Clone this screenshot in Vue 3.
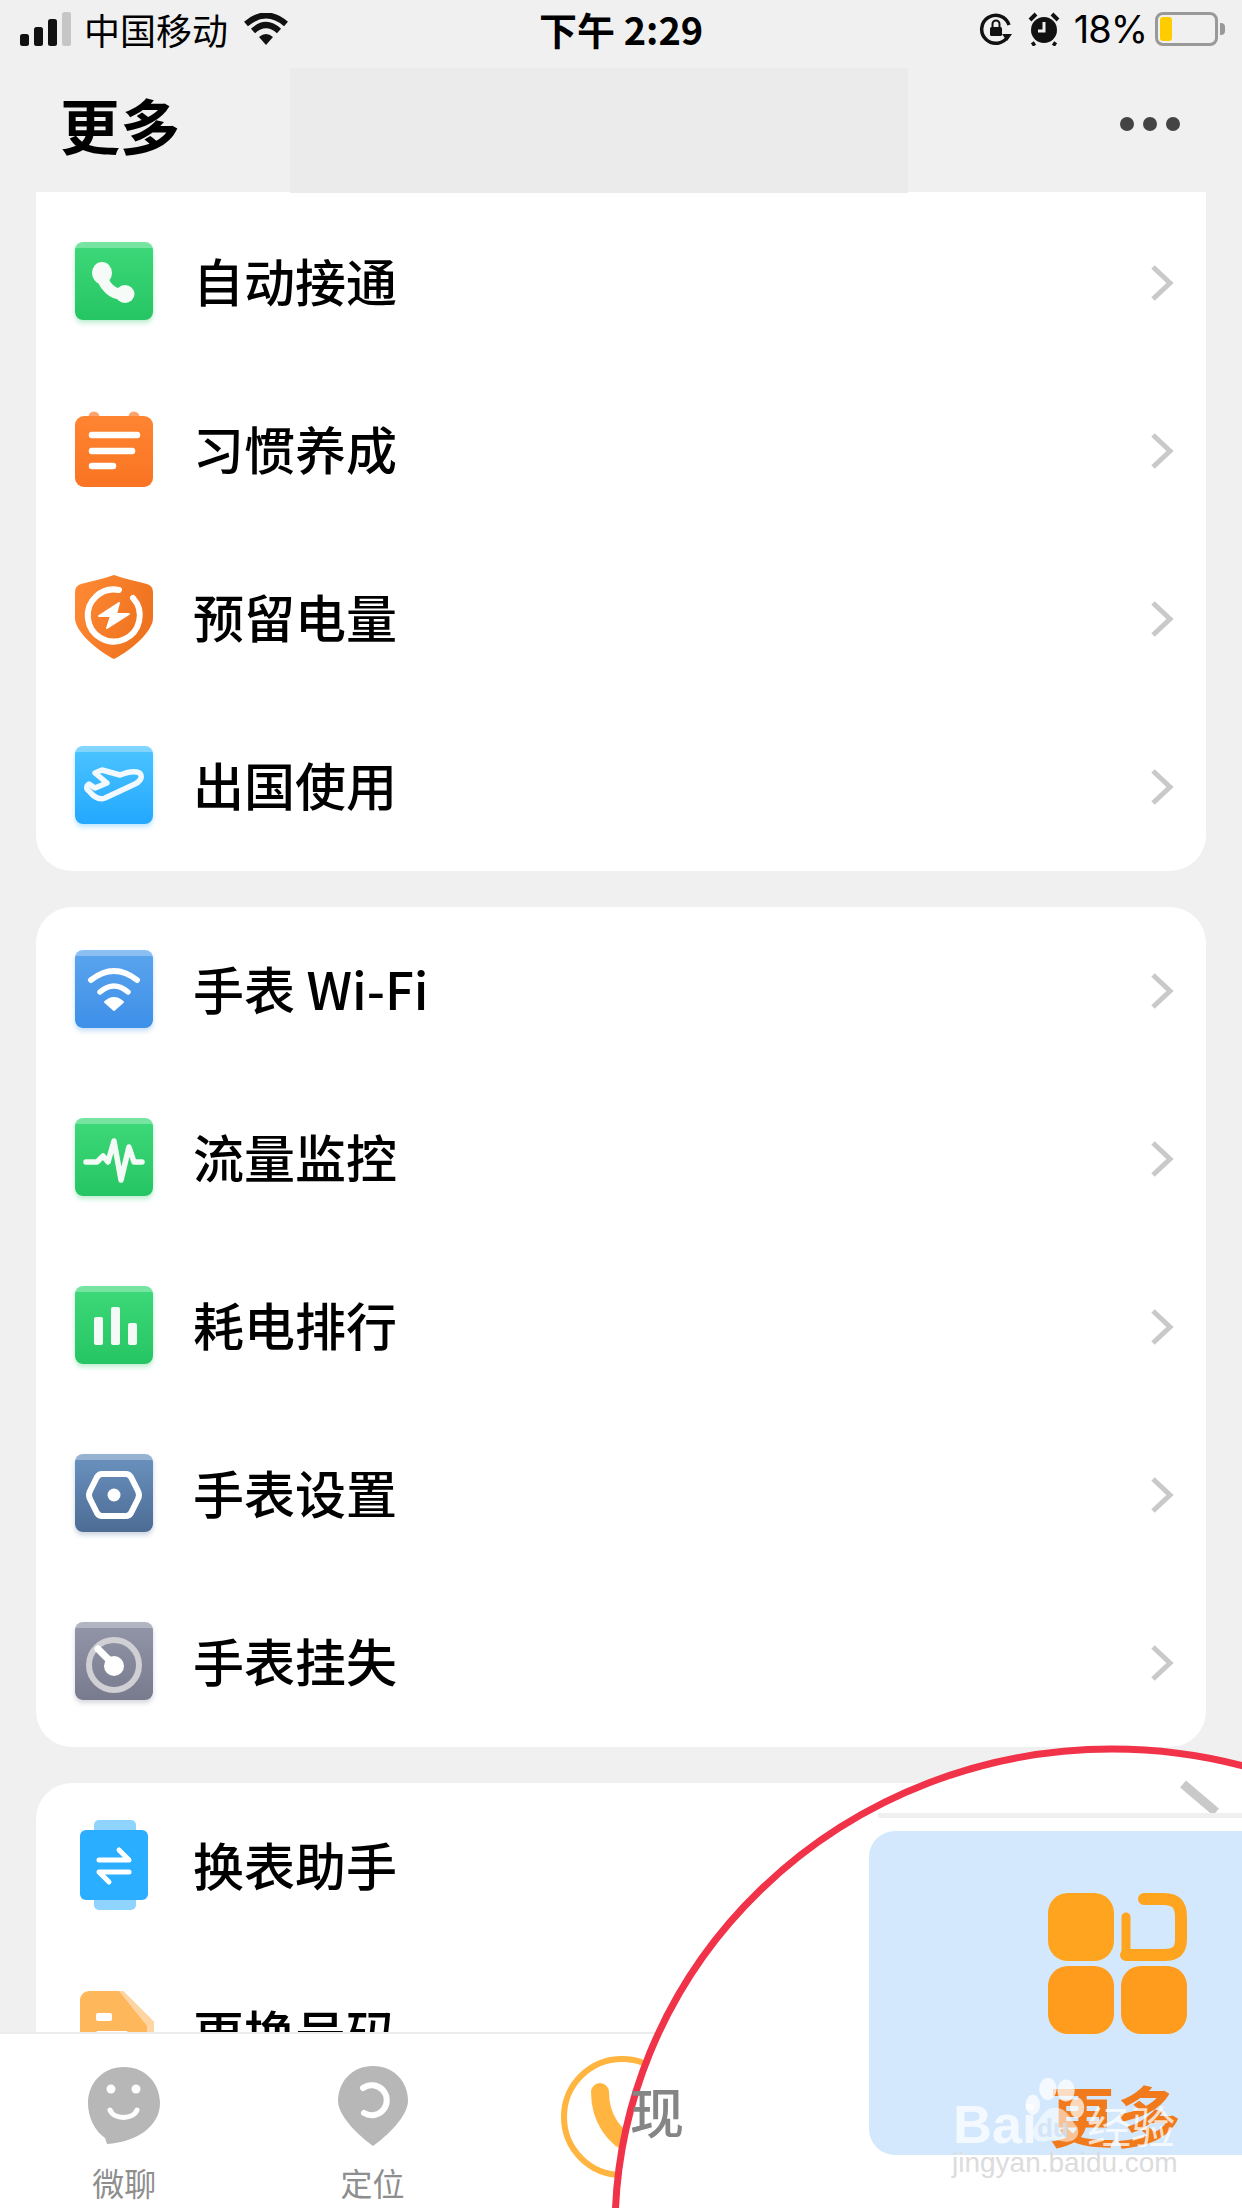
<script setup>
const groups = [
  [
    { label: '自动接通', icon: 'phone', tile: 'green' },
    { label: '习惯养成', icon: 'calendar', tile: '' },
    { label: '预留电量', icon: 'shield', tile: '' },
    { label: '出国使用', icon: 'plane', tile: 'sky' }
  ],
  [
    { label: '手表 Wi-Fi', icon: 'wifi', tile: 'blue' },
    { label: '流量监控', icon: 'pulse', tile: 'green' },
    { label: '耗电排行', icon: 'bars', tile: 'green' },
    { label: '手表设置', icon: 'hex', tile: 'steel' },
    { label: '手表挂失', icon: 'gauge', tile: 'slate' }
  ],
  [
    { label: '换表助手', icon: 'watch', tile: '' },
    { label: '更换号码', icon: 'file', tile: '' }
  ]
]
</script>

<template>
  <div class="page">
    <!-- status bar -->
    <div class="status">
      <div class="status-left">
        <svg class="signal" width="52" height="34" viewBox="0 0 52 34">
          <rect x="0" y="22" width="9" height="12" rx="2.5" fill="#111" />
          <rect x="14" y="15" width="9" height="19" rx="2.5" fill="#111" />
          <rect x="28" y="7" width="9" height="27" rx="2.5" fill="#111" />
          <rect x="42" y="0" width="9" height="34" rx="2.5" fill="#c6c6c6" />
        </svg>
        <span class="carrier">中国移动</span>
        <svg width="46" height="32" viewBox="0 0 46 32">
          <path d="M3 11 Q23 -6 43 11" fill="none" stroke="#111" stroke-width="6" />
          <path d="M10 18 Q23 6 36 18" fill="none" stroke="#111" stroke-width="6" />
          <path d="M16 24 Q23 18 30 24 L23 32 Z" fill="#111" />
        </svg>
      </div>
      <div class="clock">下午 2:29</div>
      <div class="status-right">
        <svg width="34" height="34" viewBox="0 0 34 34">
          <path d="M29 24 A14 14 0 1 1 30 13" fill="none" stroke="#111" stroke-width="3.5" />
          <path d="M23 22 L33 22 L28 29 Z" fill="#111" />
          <rect x="11" y="15" width="12" height="9" rx="1.5" fill="#111" />
          <path d="M13.5 15 V12 A3.5 3.5 0 0 1 20.5 12 V15" fill="none" stroke="#111" stroke-width="2" />
        </svg>
        <svg width="32" height="34" viewBox="0 0 32 34">
          <circle cx="16" cy="18" r="13" fill="#111" />
          <path d="M16 10 V19 H10" fill="none" stroke="#f0f0f0" stroke-width="3" />
          <path d="M2 8 L8 2 M30 8 L24 2 M7 31 L4 33 M25 31 L28 33" stroke="#111" stroke-width="4" />
        </svg>
        <span class="percent">18%</span>
        <div class="battery">
          <div class="battery-fill"></div>
        </div>
      </div>
    </div>

    <!-- title bar -->
    <div class="header">
      <h1 class="title">更多</h1>
      <div class="dots"><i></i><i></i><i></i></div>
    </div>

    <!-- settings list -->
    <div class="list">
      <div v-for="(group, g) in groups" :key="g" class="card">
        <div v-for="item in group" :key="item.label" class="row">
          <div class="tile" :class="item.tile">
            <svg width="78" height="78" viewBox="0 0 78 78">
              <template v-if="item.icon === 'phone'">
                <path d="M27 31 C27 43 38 54 50 52" fill="none" stroke="#f6fbf7" stroke-width="11" />
                <ellipse cx="27" cy="31" rx="10" ry="11" fill="#f6fbf7" />
                <ellipse cx="50" cy="52" rx="9.5" ry="9" fill="#f6fbf7" />
              </template>
              <template v-else-if="item.icon === 'calendar'">
                <circle cx="19" cy="7" r="5.5" fill="#fba36b" />
                <circle cx="59" cy="7" r="5.5" fill="#fba36b" />
                <rect x="0" y="6" width="78" height="71" rx="9" fill="url(#calFill)" />
                <defs>
                  <linearGradient id="calFill" x1="0" y1="0" x2="0" y2="1">
                    <stop offset="0" stop-color="#ff8431" />
                    <stop offset="1" stop-color="#f97423" />
                  </linearGradient>
                  <linearGradient id="shieldFill" x1="0" y1="0" x2="1" y2="0.4">
                    <stop offset="0" stop-color="#ff8a35" />
                    <stop offset="1" stop-color="#ef731f" />
                  </linearGradient>
                </defs>
                <path d="M17 25 H62 M17 41 H57 M17 56 H38" stroke="#fff" stroke-width="6.5" stroke-linecap="round" fill="none" />
              </template>
              <template v-else-if="item.icon === 'shield'">
                <path d="M39 -3 C50 1 62 3 72 6 Q78 8 78 14 V40 C78 54 55 73 39 81 C23 73 0 54 0 40 V14 Q0 8 6 6 C16 3 28 1 39 -3 Z" fill="url(#shieldFill)" />
                <path d="M44 12 A26 26 0 1 0 58 20" fill="none" stroke="#fff" stroke-width="6" stroke-linecap="round" />
                <path d="M44 25 L24 38 H36 L32 50 L54 36 H41 Z" fill="#fff" stroke="#fff" stroke-width="2" stroke-linejoin="round" />
              </template>
              <template v-else-if="item.icon === 'plane'">
                <path d="M62 26 C56 25 50 27 45 29 L27 24 L20 27 L32 37 L20 42 L14 38 C11 40 11 43 14 45 C18 50 23 55 30 52 L60 38 C68 34 68 27 62 26 Z" fill="none" stroke="#f1f9ff" stroke-width="5.5" stroke-linejoin="round" />
              </template>
              <template v-else-if="item.icon === 'wifi'">
                <path d="M16 30 Q39 12 62 30" fill="none" stroke="#fff" stroke-width="6" stroke-linecap="round" />
                <path d="M25 42 Q39 30 53 42" fill="none" stroke="#fff" stroke-width="5.5" stroke-linecap="round" />
                <path d="M30 52 Q39 44 48 52 L39 60 Z" fill="#fff" stroke="#fff" stroke-width="2" stroke-linejoin="round" />
              </template>
              <template v-else-if="item.icon === 'pulse'">
                <path d="M11 44 H22 L28 38 L33 44 L39 23 L46 62 L54 29 L59 44 H67" fill="none" stroke="#f4fbf6" stroke-width="5.5" stroke-linecap="round" stroke-linejoin="round" />
              </template>
              <template v-else-if="item.icon === 'bars'">
                <rect x="19" y="31" width="9" height="28" rx="2" fill="#f4fbf6" />
                <rect x="36" y="21" width="9" height="38" rx="2" fill="#f4fbf6" />
                <rect x="53" y="37" width="9" height="22" rx="2" fill="#f4fbf6" />
              </template>
              <template v-else-if="item.icon === 'hex'">
                <path d="M27 20 H51 Q54 20 56 23 L63 37 Q65 41 63 45 L56 59 Q54 62 51 62 H27 Q24 62 22 59 L15 45 Q13 41 15 37 L22 23 Q24 20 27 20 Z" fill="none" stroke="#fff" stroke-width="6" stroke-linejoin="round" />
                <circle cx="39" cy="41" r="6.5" fill="#fff" />
              </template>
              <template v-else-if="item.icon === 'gauge'">
                <circle cx="39" cy="43" r="25" fill="none" stroke="#cfcfd4" stroke-width="6" />
                <path d="M23 27 L39 43" stroke="#fff" stroke-width="7" stroke-linecap="round" />
                <circle cx="39" cy="44" r="10" fill="#fff" />
              </template>
              <template v-else-if="item.icon === 'watch'">
                <rect x="19" y="-6" width="42" height="20" rx="5" fill="#8ed4ff" />
                <rect x="19" y="64" width="42" height="20" rx="5" fill="#8ed4ff" />
                <rect x="5" y="4" width="68" height="70" rx="6" fill="#2aaeff" />
                <path d="M24 34 H54 L44 24 M54 46 H24 L34 56" fill="none" stroke="#fff" stroke-width="5" stroke-linecap="round" stroke-linejoin="round" />
              </template>
              <template v-else-if="item.icon === 'file'">
                <path d="M5 6 A9 9 0 0 1 14 -3 H48 L79 28 V90 H5 Z" fill="#ffb75c" />
                <path d="M44 -3 H48 L79 28 V90 H72 V32 Z" fill="#ffd6a3" />
                <rect x="21" y="19" width="16" height="8" rx="2" fill="#fff" />
                <rect x="21" y="37" width="32" height="8" rx="2" fill="#fff" />
              </template>
            </svg>
          </div>
          <span class="label">{{ item.label }}</span>
          <svg class="chev" width="24" height="38" viewBox="0 0 24 38">
            <path d="M3 3 L20 19 L3 35" fill="none" stroke="#c9c9c9" stroke-width="5" />
          </svg>
        </div>
      </div>
    </div>

    <!-- bottom tabs -->
    <div class="tabs">
      <div class="tab">
        <svg width="74" height="80" viewBox="0 0 74 80">
          <path d="M37 1 C58 1 73 17 73 37 C73 60 50 76 20 78 L18 72 C8 65 1 52 1 37 C1 17 16 1 37 1 Z" fill="#b7b7b7" />
          <circle cx="24" cy="23" r="4.5" fill="#fff" />
          <circle cx="49" cy="23" r="4.5" fill="#fff" />
          <path d="M23 44 C27 54 46 54 50 44" fill="none" stroke="#fff" stroke-width="5" stroke-linecap="round" />
        </svg>
        <span>微聊</span>
      </div>
      <div class="tab">
        <svg width="72" height="80" viewBox="0 0 72 80">
          <path d="M36 0 C57 0 71 16 71 35 C71 50 50 70 36 80 C22 70 1 50 1 35 C1 16 15 0 36 0 Z" fill="#b7b7b7" />
          <path d="M26 22 A15 15 0 1 1 27 47" fill="none" stroke="#fff" stroke-width="6" stroke-linecap="round" />
        </svg>
        <span>定位</span>
      </div>
      <div class="tab tab-call">
        <svg width="126" height="126" viewBox="0 0 126 126">
          <circle cx="64" cy="63" r="58" fill="none" stroke="#ffb53f" stroke-width="6" />
          <path d="M42 38 C42 64 56 84 76 92" fill="none" stroke="#ffb53f" stroke-width="18" stroke-linecap="round" />
        </svg>
      </div>
    </div>

    <!-- redaction over the title bar -->
    <div class="redact"></div>

    <!-- hand drawn annotation with the enlarged tab -->
    <div class="callout">
      <svg class="callout-ring" width="642" height="478" viewBox="600 1730 642 478">
        <ellipse cx="1112" cy="2230" rx="497" ry="481" fill="#fff" />
        <path d="M1183 1784 L1216 1812" stroke="#c9c9c9" stroke-width="9" />
        <path d="M878 1815.5 H1242" stroke="#f0f0f0" stroke-width="5" />
        <ellipse cx="1112" cy="2230" rx="497" ry="481" fill="none" stroke="#f13349" stroke-width="7" />
      </svg>
      <span class="now">现</span>
      <div class="zoomed">
        <svg class="soft" width="140" height="142" viewBox="0 0 140 142">
          <rect x="0" y="0" width="66" height="68" rx="20" fill="#ffa41f" />
          <rect x="0" y="73" width="66" height="68" rx="20" fill="#ff9c1d" />
          <rect x="73" y="73" width="66" height="68" rx="20" fill="#ff9c1d" />
          <path d="M78 24 V62" fill="none" stroke="#ffa41f" stroke-width="9" stroke-linecap="round" />
          <path d="M96 6 H116 C128 6 133 12 133 24 V46 C133 58 128 62 116 62 H78" fill="none" stroke="#ffa41f" stroke-width="12" stroke-linecap="round" />
        </svg>
        <span class="zoomed-label soft">更多</span>
        <div class="mark">
          <svg class="paw" width="60" height="72" viewBox="0 0 76 84">
            <ellipse cx="29" cy="14" rx="11" ry="14" fill="#fff" fill-opacity=".75" />
            <ellipse cx="52" cy="16" rx="11" ry="14" fill="#fff" fill-opacity=".75" />
            <ellipse cx="10" cy="34" rx="9" ry="13" fill="#fff" fill-opacity=".75" />
            <ellipse cx="66" cy="38" rx="9" ry="13" fill="#fff" fill-opacity=".7" />
            <path d="M38 38 C54 38 58 54 66 62 C72 76 58 84 46 80 C40 78 34 78 28 80 C14 84 6 74 12 62 C20 52 24 38 38 38 Z" fill="#fff" fill-opacity=".55" />
          </svg>
          <span class="mark-bai">Bai</span>
          <span class="mark-du">du</span>
          <span class="mark-jy">经验</span>
          <span class="mark-url">jingyan.baidu.com</span>
        </div>
      </div>
    </div>
  </div>
</template>

<style scoped>
.page {
  position: relative;
  width: 1242px;
  height: 2208px;
  overflow: hidden;
  display: flex;
  flex-direction: column;
  background: #f0f0f0;
  font-family: "Noto Sans CJK SC", "Noto Sans", sans-serif;
  color: #000;
}

.status {
  height: 64px;
  flex-shrink: 0;
  display: flex;
  align-items: center;
  justify-content: space-between;
  padding: 0 24px 6px 20px;
  box-sizing: border-box;
  position: relative;
}

.status-left,
.status-right {
  display: flex;
  align-items: center;
}

.carrier {
  font-size: 36px;
  margin: 0 15px 0 12px;
  line-height: 1;
}

.clock {
  position: absolute;
  left: 539px;
  top: 6px;
  font-size: 38px;
  font-weight: 700;
  line-height: 46px;
  white-space: nowrap;
}

.status-right svg {
  margin-right: 15px;
}

.percent {
  font-family: "Inter", "Noto Sans", sans-serif;
  font-size: 38px;
  letter-spacing: -1px;
  line-height: 1;
  margin-left: -1px;
  margin-right: 8px;
}

.battery {
  width: 63px;
  height: 34px;
  border: 3px solid #999;
  border-radius: 8px;
  box-sizing: border-box;
  padding: 2px;
  position: relative;
}

.battery::after {
  content: "";
  position: absolute;
  right: -10px;
  top: 8px;
  width: 5px;
  height: 12px;
  background: #999;
  border-radius: 0 4px 4px 0;
}

.battery-fill {
  width: 12px;
  height: 100%;
  background: #ffcc00;
  border-radius: 3px;
}

.header {
  height: 128px;
  flex-shrink: 0;
  display: flex;
  align-items: center;
  justify-content: space-between;
  padding: 0 62px 8px 60px;
  box-sizing: border-box;
}

.title {
  margin: 0;
  font-size: 60px;
  font-weight: 700;
  line-height: 1;
}

.dots {
  display: flex;
  gap: 9px;
}

.dots i {
  width: 14px;
  height: 14px;
  border-radius: 50%;
  background: #444;
}

.list {
  flex: 1;
  min-height: 0;
  overflow: hidden;
  padding: 0 36px;
}

.card {
  background: #fff;
  border-radius: 36px;
  margin-bottom: 36px;
}

.card:first-child {
  padding-top: 7px;
  border-radius: 0 0 36px 36px;
}

.row {
  height: 168px;
  display: flex;
  align-items: center;
  padding: 0 32px 0 39px;
}

.tile {
  width: 78px;
  height: 78px;
  flex-shrink: 0;
  position: relative;
  border-radius: 8px;
  margin-bottom: 4px;
}

.tile svg {
  display: block;
  position: relative;
  overflow: visible;
}

.tile.green::before,
.tile.sky::before,
.tile.blue::before,
.tile.steel::before,
.tile.slate::before {
  content: "";
  position: absolute;
  left: 0;
  right: 0;
  top: 0;
  height: 6px;
  border-radius: 8px 8px 0 0;
  background: rgba(255, 255, 255, 0.3);
}

.tile.green {
  background: linear-gradient(#3ed97a, #26c563);
  box-shadow: 0 3px 5px rgba(38, 197, 99, 0.3);
}

.tile.sky {
  background: linear-gradient(#4cc4ff, #23a8ff);
  box-shadow: 0 3px 5px rgba(35, 168, 255, 0.3);
}

.tile.blue {
  background: linear-gradient(#5ca5ee, #3d8fe8);
  box-shadow: 0 3px 5px rgba(61, 143, 232, 0.3);
}

.tile.steel {
  background: linear-gradient(#6b93c0, #4c6c94);
  box-shadow: 0 3px 5px rgba(76, 108, 148, 0.3);
}

.tile.slate {
  background: linear-gradient(#9296a8, #787b8e);
  box-shadow: 0 3px 5px rgba(120, 123, 142, 0.3);
}

.label {
  flex: 1;
  margin-left: 40px;
  margin-bottom: 6px;
  font-size: 51px;
  font-weight: 500;
  line-height: 1;
  white-space: nowrap;
}

.chev {
  flex-shrink: 0;
}

.tabs {
  height: 176px;
  flex-shrink: 0;
  box-sizing: border-box;
  background: #fff;
  border-top: 2px solid #ececec;
  display: grid;
  grid-template-columns: repeat(5, 1fr);
}

.tab {
  display: flex;
  flex-direction: column;
  align-items: center;
  padding-top: 32px;
  color: #8e8e8e;
  font-size: 32px;
  line-height: 1;
}

.tab span {
  margin-top: 20px;
}

.tab-call {
  padding-top: 20px;
}

.redact {
  position: absolute;
  left: 290px;
  top: 68px;
  width: 618px;
  height: 125px;
  background: #ebebeb;
}

.callout {
  position: absolute;
  left: 600px;
  top: 1730px;
  width: 642px;
  height: 478px;
}

.callout-ring {
  position: absolute;
  left: 0;
  top: 0;
}

.now {
  position: absolute;
  left: 30px;
  top: 354px;
  font-size: 54px;
  line-height: 1;
  font-weight: 500;
  color: #858585;
}

.zoomed {
  position: absolute;
  left: 269px;
  top: 101px;
  width: 373px;
  height: 324px;
  box-sizing: border-box;
  padding: 62px 54px 0 0;
  background: #d3e8fd;
  border-radius: 26px 0 0 26px;
  display: flex;
  flex-direction: column;
  align-items: flex-end;
}

.soft {
  filter: blur(0.7px);
}

.zoomed-label {
  margin-top: 45px;
  margin-right: 7px;
  font-size: 66px;
  font-weight: 700;
  line-height: 1;
  color: #f07a1c;
}

.mark {
  position: absolute;
  left: 84px;
  top: 230px;
  width: 230px;
  height: 120px;
}

.paw {
  position: absolute;
  left: 72px;
  top: 14px;
}

.mark-bai {
  position: absolute;
  left: 0;
  top: 36px;
  font-family: "Liberation Sans", sans-serif;
  font-size: 54px;
  font-weight: 700;
  line-height: 1;
  color: rgba(255, 255, 255, 0.75);
}

.mark-du {
  position: absolute;
  left: 84px;
  top: 54px;
  font-family: "Liberation Sans", sans-serif;
  font-size: 26px;
  font-weight: 700;
  line-height: 1;
  color: rgba(205, 225, 245, 0.8);
}

.mark-jy {
  position: absolute;
  left: 134px;
  top: 42px;
  font-size: 44px;
  line-height: 1;
  color: rgba(255, 255, 255, 0.75);
}

.mark-url {
  position: absolute;
  left: -1px;
  top: 88px;
  font-family: "Liberation Sans", sans-serif;
  font-size: 28px;
  line-height: 1;
  white-space: nowrap;
  color: #dcdcdc;
}
</style>

<style>
html,
body {
  margin: 0;
  background: #f0f0f0;
}
</style>
